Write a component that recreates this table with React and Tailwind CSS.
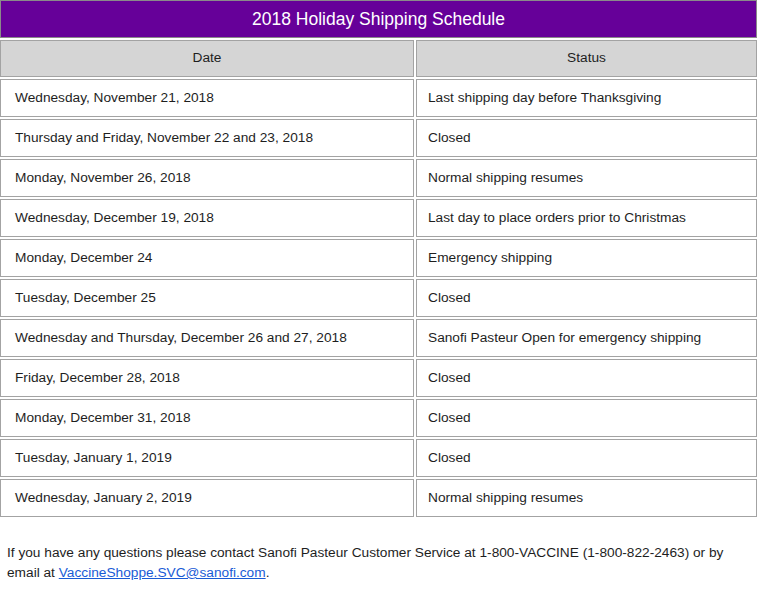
import React from 'react'

const ROWS = [
  ['Wednesday, November 21, 2018', 'Last shipping day before Thanksgiving'],
  ['Thursday and Friday, November 22 and 23, 2018', 'Closed'],
  ['Monday, November 26, 2018', 'Normal shipping resumes'],
  ['Wednesday, December 19, 2018', 'Last day to place orders prior to Christmas'],
  ['Monday, December 24', 'Emergency shipping'],
  ['Tuesday, December 25', 'Closed'],
  ['Wednesday and Thursday, December 26 and 27, 2018', 'Sanofi Pasteur Open for emergency shipping'],
  ['Friday, December 28, 2018', 'Closed'],
  ['Monday, December 31, 2018', 'Closed'],
  ['Tuesday, January 1, 2019', 'Closed'],
  ['Wednesday, January 2, 2019', 'Normal shipping resumes'],
]

export default function App() {
  return (
    <div className="bg-white w-[769px] h-[597px] overflow-hidden text-[#1e1e1e] font-['Liberation_Sans',Arial,sans-serif]">
      <div className="w-[757px] flex flex-col gap-[2px]">
        {/* Title bar */}
        <div className="h-[38px] bg-[#660099] border border-[#8a8a8a] flex items-center justify-center text-white text-[17.5px]">
          2018 Holiday Shipping Schedule
        </div>

        {/* Column headers */}
        <div className="grid grid-cols-[414px_341px] gap-[2px]">
          <div className="h-[37px] bg-[#d5d5d5] border border-[#a3a3a3] flex items-center justify-center text-[13.7px]">
            Date
          </div>
          <div className="h-[37px] bg-[#d5d5d5] border border-[#a3a3a3] flex items-center justify-center text-[13.7px]">
            Status
          </div>
        </div>

        {/* Rows */}
        {ROWS.map(([date, status], i) => (
          <div key={i} className="grid grid-cols-[414px_341px] gap-[2px]">
            <div className="h-[38px] border border-[#a3a3a3] flex items-center pl-[14px] text-[13.7px]">
              {date}
            </div>
            <div className="h-[38px] border border-[#a3a3a3] flex items-center pl-[11px] text-[13.7px]">
              {status}
            </div>
          </div>
        ))}
      </div>

      {/* Contact note */}
      <div className="mt-[26px] pl-[7px] pr-[20px] text-[13.7px] leading-[20px]">
        <p>If you have any questions please contact Sanofi Pasteur Customer Service at 1-800-VACCINE (1-800-822-2463) or by</p>
        <p>
          email at <a href="#" className="text-[#1a5bd6] underline">VaccineShoppe.SVC@sanofi.com</a>.
        </p>
      </div>
    </div>
  )
}
